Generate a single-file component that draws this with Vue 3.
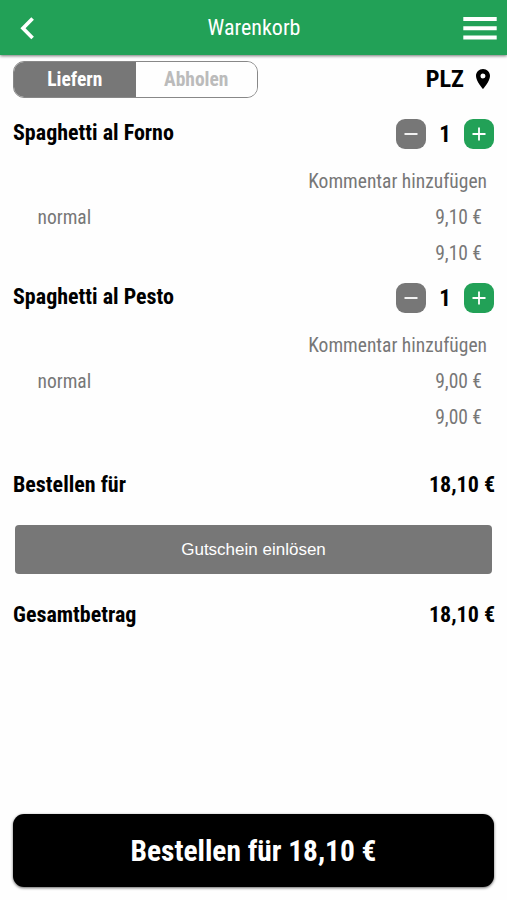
<script setup>
const items = [
  { name: 'Spaghetti al Forno', count: 1, variant: 'normal', price: '9,10 €', total: '9,10 €' },
  { name: 'Spaghetti al Pesto', count: 1, variant: 'normal', price: '9,00 €', total: '9,00 €' },
]
const total = '18,10 €'
</script>

<template>
  <div class="page">
    <header class="bar">
      <svg class="back" viewBox="0 0 14 24" width="14" height="24"><path d="M12.6 2.5 3 12.3 12.6 22" fill="none" stroke="#fff" stroke-width="3.7" /></svg>
      <h1 class="title">Warenkorb</h1>
      <svg class="menu" viewBox="0 0 34 24" width="34" height="24"><path d="M.3 3h33.4M.3 12.2h33.4M.3 21.4h33.4" stroke="#fff" stroke-width="4" /></svg>
    </header>

    <div class="mode">
      <div class="switch">
        <button class="option active">Liefern</button>
        <button class="option">Abholen</button>
      </div>
      <div class="plz">
        <span>PLZ</span>
        <svg viewBox="5 2 14 20" width="14" height="20"><path d="M12 2C8.13 2 5 5.13 5 9c0 5.25 7 13 7 13s7-7.75 7-13c0-3.87-3.13-7-7-7zm0 9.5a2.5 2.5 0 1 1 0-5 2.5 2.5 0 0 1 0 5z" /></svg>
      </div>
    </div>

    <section v-for="item in items" :key="item.name" class="item">
      <div class="head">
        <h2 class="name">{{ item.name }}</h2>
        <div class="stepper">
          <button class="step minus"><svg viewBox="0 0 14 14" width="14" height="14"><path d="M0.5 7h13" stroke="#fff" stroke-width="1.8" /></svg></button>
          <span class="count">{{ item.count }}</span>
          <button class="step plus"><svg viewBox="0 0 14 14" width="14" height="14"><path d="M0.5 7h13M7 0.5v13" stroke="#fff" stroke-width="1.8" /></svg></button>
        </div>
      </div>
      <div class="comment">Kommentar hinzufügen</div>
      <div class="line"><span>{{ item.variant }}</span><span>{{ item.price }}</span></div>
      <div class="line end"><span>{{ item.total }}</span></div>
    </section>

    <div class="sum"><span>Bestellen für</span><span>{{ total }}</span></div>
    <button class="voucher">Gutschein einlösen</button>
    <div class="sum grand"><span>Gesamtbetrag</span><span>{{ total }}</span></div>

    <button class="order">Bestellen für {{ total }}</button>
  </div>
</template>

<style>
body { background: #fefefe; }
</style>

<style scoped>
.page {
  box-sizing: border-box;
  width: 507px;
  height: 900px;
  display: flex;
  flex-direction: column;
  overflow: hidden;
  background: #fefefe;
  color: #000;
  font-family: "Roboto Condensed", Roboto, sans-serif;
  font-stretch: 75%;
}
button { border: 0; margin: 0; padding: 0; font: inherit; color: inherit; }
svg { display: block; }
.bar {
  height: 55px;
  flex: none;
  box-sizing: border-box;
  padding: 0 10px 0 20px;
  display: grid;
  grid-template-columns: 25px 1fr 34px;
  align-items: center;
  background: #22a157;
  box-shadow: 0 1px 3px rgba(0, 0, 0, .55);
}
.title { margin: 0; color: #fff; text-align: center; font-size: 22px; font-weight: 400; line-height: 55px; }
.mode {
  height: 37px;
  flex: none;
  margin: 6px 17px 0 13px;
  display: flex;
  justify-content: space-between;
  align-items: center;
}
.switch {
  box-sizing: border-box;
  width: 245px;
  height: 37px;
  display: grid;
  grid-template-columns: 1fr 1fr;
  overflow: hidden;
  border: 1px solid #888;
  border-radius: 11px;
}
.option { background: #fefefe; color: #bbb; font-size: 19.5px; font-weight: 700; }
.option.active { background: #777; color: #fff; }
.plz { display: flex; align-items: center; gap: 12px; padding-bottom: 2px; font-size: 24.3px; font-weight: 700; }
.item { flex: none; height: 164px; padding: 0 13px; }
.mode + .item { margin-top: 17px; }
.head { display: flex; justify-content: space-between; height: 38px; }
.name { margin: 0; font-size: 22px; line-height: 36px; font-weight: 700; }
.stepper { display: grid; grid-template-columns: 30px 38px 30px; height: 38px; align-items: center; }
.step { width: 30px; height: 30px; border-radius: 9px; display: flex; align-items: center; justify-content: center; }
.minus { background: #777; }
.plus { background: #22a157; }
.count { text-align: center; font-size: 23px; font-weight: 700; }
.comment { margin-top: 11px; padding-right: 7px; text-align: right; font-size: 19.5px; line-height: 36px; color: #777; }
.line { display: flex; justify-content: space-between; padding: 0 12px 0 24.5px; font-size: 19.5px; line-height: 36px; color: #777; }
.line.end { justify-content: flex-end; }
.sum { flex: none; display: flex; justify-content: space-between; margin: 24px 12px 0 13px; font-size: 22px; font-weight: 700; line-height: 36px; }
.sum.grand { margin-top: 23px; }
.voucher {
  flex: none;
  height: 49px;
  margin: 22px 15px 0;
  border-radius: 4px;
  background: #777;
  color: #fff;
  font-family: "Liberation Sans", sans-serif;
  font-size: 17px;
}
.order {
  flex: none;
  height: 73px;
  margin: auto 13px 13px;
  border-radius: 11px;
  background: #000;
  color: #fff;
  font-size: 29.4px;
  font-weight: 700;
  box-shadow: 0 1px 3px rgba(0, 0, 0, .6);
}
</style>
